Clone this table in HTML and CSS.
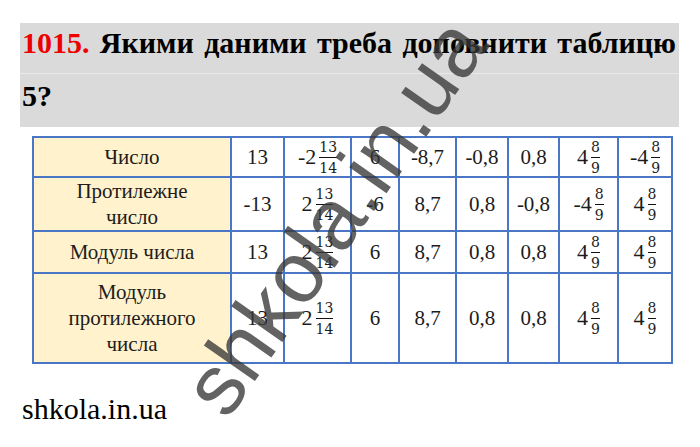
FILE: index.html
```html
<!DOCTYPE html>
<html lang="uk">
<head>
<meta charset="utf-8">
<title>1015</title>
<link rel="stylesheet" href="styles.css">
</head>
<body>
<div class="page">
  <div class="task">
    <div class="task-line first"><span class="num">1015.</span> Якими даними треба доповнити таблицю</div>
    <div class="task-line second">5?</div>
  </div>

  <table class="grid">
    <colgroup>
      <col class="c-label"><col class="c1"><col class="c2"><col class="c3"><col class="c4"><col class="c5"><col class="c6"><col class="c7"><col class="c8">
    </colgroup>
    <tr class="r1">
      <td class="label">Число</td>
      <td>13</td>
      <td><span class="mixed"><span class="int">-2</span><span class="frac"><span>13</span><span class="bar"></span><span>14</span></span></span></td>
      <td>6</td>
      <td>-8,7</td>
      <td>-0,8</td>
      <td>0,8</td>
      <td><span class="mixed"><span class="int">4</span><span class="frac"><span>8</span><span class="bar"></span><span>9</span></span></span></td>
      <td><span class="mixed"><span class="int">-4</span><span class="frac"><span>8</span><span class="bar"></span><span>9</span></span></span></td>
    </tr>
    <tr class="r2">
      <td class="label">Протилежне<br>число</td>
      <td>-13</td>
      <td><span class="mixed"><span class="int">2</span><span class="frac"><span>13</span><span class="bar"></span><span>14</span></span></span></td>
      <td>-6</td>
      <td>8,7</td>
      <td>0,8</td>
      <td>-0,8</td>
      <td><span class="mixed"><span class="int">-4</span><span class="frac"><span>8</span><span class="bar"></span><span>9</span></span></span></td>
      <td><span class="mixed"><span class="int">4</span><span class="frac"><span>8</span><span class="bar"></span><span>9</span></span></span></td>
    </tr>
    <tr class="r3">
      <td class="label">Модуль числа</td>
      <td>13</td>
      <td><span class="mixed"><span class="int">2</span><span class="frac"><span>13</span><span class="bar"></span><span>14</span></span></span></td>
      <td>6</td>
      <td>8,7</td>
      <td>0,8</td>
      <td>0,8</td>
      <td><span class="mixed"><span class="int">4</span><span class="frac"><span>8</span><span class="bar"></span><span>9</span></span></span></td>
      <td><span class="mixed"><span class="int">4</span><span class="frac"><span>8</span><span class="bar"></span><span>9</span></span></span></td>
    </tr>
    <tr class="r4">
      <td class="label">Модуль<br>протилежного<br>числа</td>
      <td>13</td>
      <td><span class="mixed"><span class="int">2</span><span class="frac"><span>13</span><span class="bar"></span><span>14</span></span></span></td>
      <td>6</td>
      <td>8,7</td>
      <td>0,8</td>
      <td>0,8</td>
      <td><span class="mixed"><span class="int">4</span><span class="frac"><span>8</span><span class="bar"></span><span>9</span></span></span></td>
      <td><span class="mixed"><span class="int">4</span><span class="frac"><span>8</span><span class="bar"></span><span>9</span></span></span></td>
    </tr>
  </table>

  <p class="site">shkola.in.ua</p>

  <div class="watermark">shkola.in.ua</div>
</div>
</body>
</html>
```

FILE: styles.css
```css
html, body {
  margin: 0;
  padding: 0;
  background: #ffffff;
}

.page {
  position: relative;
  width: 700px;
  height: 447px;
  padding: 23px 21px 0 20px;
  box-sizing: border-box;
  font-family: "Liberation Serif", "Times New Roman", serif;
  color: #000;
}

.task {
  display: flex;
  flex-direction: column;
  gap: 1px;
  background: #e9e9e9;
}

.task-line {
  background: #dadada;
  font-weight: bold;
  font-size: 30px;
  padding: 0 3px 0 2px;
  box-sizing: border-box;
}

.task-line.first {
  height: 50px;
  line-height: 40px;
  text-align: justify;
  text-align-last: justify;
  white-space: nowrap;
}

.task-line.second {
  height: 53px;
  line-height: 44px;
}

.num {
  color: #ee0000;
}

.grid {
  margin: 9px 0 0 12px;
  border-collapse: collapse;
  table-layout: fixed;
  width: 639px;
  font-size: 21px;
  color: #1c1c1c;
}

.c-label { width: 198px; }
.c1 { width: 53px; }
.c2 { width: 67px; }
.c3 { width: 48px; }
.c4 { width: 57px; }
.c5 { width: 52px; }
.c6 { width: 51px; }
.c7 { width: 59px; }
.c8 { width: 54px; }

.grid td {
  border: 2px solid #4a76c6;
  padding: 0;
  text-align: center;
  vertical-align: middle;
  line-height: 26px;
}

.grid td.label {
  background: #fff2cc;
}

.r1 td { height: 38px; }
.r2 td { height: 52px; }
.r3 td { height: 40px; }
.r4 td { height: 88px; }

.mixed {
  display: inline-flex;
  align-items: center;
  gap: 3px;
  vertical-align: middle;
}

.int {
  line-height: 1;
  font-size: 22px;
}

.frac {
  display: inline-flex;
  flex-direction: column;
  align-items: center;
  font-family: "DejaVu Serif", "Liberation Serif", serif;
  font-size: 14px;
  line-height: 14px;
}

.bar {
  display: block;
  align-self: stretch;
  height: 1px;
  background: #111;
  margin: 3px 0 3px;
}

.site {
  margin: 29px 0 0 2px;
  font-size: 30px;
  line-height: 32px;
}

.watermark {
  position: absolute;
  left: 334px;
  top: 216px;
  transform: translate(-50%, -50%) rotate(-55deg);
  font-family: "Liberation Sans", Arial, sans-serif;
  font-size: 86px;
  line-height: 1;
  white-space: nowrap;
  color: rgba(55, 55, 55, 0.78);
  pointer-events: none;
}
```
